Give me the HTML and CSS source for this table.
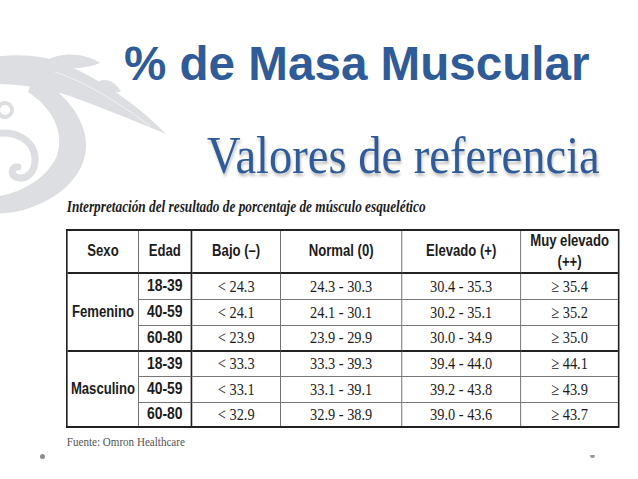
FILE: index.html
```html
<!DOCTYPE html>
<html lang="es">
<head>
<meta charset="utf-8">
<title>% de Masa Muscular</title>
<link rel="stylesheet" href="styles.css">
</head>
<body>
<div class="slide">
  <svg class="ornament" width="200" height="230" viewBox="0 0 200 230" aria-hidden="true">
    <g fill="#dcdee2">
      <path d="M-5 57 C 20 53, 45 56, 62 63 C 97 77, 137 104, 166 134 C 135 121, 100 107, 75 98 C 55 90, 25 84, -5 84 Z"/>
      <path d="M34 74 C 64 92, 88 120, 86 148 C 84 178, 56 203, 15 212 L -5 214 L -5 197 C 22 193, 46 178, 56 158 C 64 138, 58 112, 28 92 Z"/>
      <path d="M45 62 C 60 51, 85 53, 100 63 C 85 70, 62 70, 45 62 Z"/>
      <path d="M98 82 C 106 77, 116 82, 121 92 C 112 93, 103 89, 98 82 Z"/>
    </g>
    <g fill="none" stroke="#dcdee2" stroke-linecap="round">
      <path d="M80 94 C 105 102, 130 113, 150 123" stroke-width="2"/>
      <circle cx="5" cy="110" r="7" stroke-width="4"/>
      <path d="M-5 134 C 15 130, 34 140, 35 158 C 36 173, 25 181, 16 177 C 10 174, 12 166, 18 167" stroke-width="7"/>
    </g>
    <g fill="none" stroke="#ffffff" stroke-opacity="0.6" stroke-linecap="round">
      <path d="M55 72 C 85 82, 115 100, 150 126" stroke-width="1"/>
    </g>
  </svg>

  <h1 class="title">% de Masa Muscular</h1>
  <h2 class="subtitle"><span class="subtitle-text">Valores de referencia</span></h2>

  <div class="fig">
    <p class="caption">Interpretación del resultado de porcentaje de músculo esquelético</p>
    <div class="tbl">
      <div class="c hd">Sexo</div>
      <div class="c hd edad">Edad</div>
      <div class="c hd">Bajo (–)</div>
      <div class="c hd">Normal (0)</div>
      <div class="c hd">Elevado (+)</div>
      <div class="c hd last lh">Muy elevado<br>(++)</div>

      <div class="c sex grp">Femenino</div>
      <div class="c age edad">18-39</div>
      <div class="c val">&lt; 24.3</div>
      <div class="c val">24.3 - 30.3</div>
      <div class="c val">30.4 - 35.3</div>
      <div class="c val last">≥ 35.4</div>

      <div class="c age edad">40-59</div>
      <div class="c val">&lt; 24.1</div>
      <div class="c val">24.1 - 30.1</div>
      <div class="c val">30.2 - 35.1</div>
      <div class="c val last">≥ 35.2</div>

      <div class="c age edad grp">60-80</div>
      <div class="c val grp">&lt; 23.9</div>
      <div class="c val grp">23.9 - 29.9</div>
      <div class="c val grp">30.0 - 34.9</div>
      <div class="c val grp last">≥ 35.0</div>

      <div class="c sex end">Masculino</div>
      <div class="c age edad">18-39</div>
      <div class="c val">&lt; 33.3</div>
      <div class="c val">33.3 - 39.3</div>
      <div class="c val">39.4 - 44.0</div>
      <div class="c val last">≥ 44.1</div>

      <div class="c age edad">40-59</div>
      <div class="c val">&lt; 33.1</div>
      <div class="c val">33.1 - 39.1</div>
      <div class="c val">39.2 - 43.8</div>
      <div class="c val last">≥ 43.9</div>

      <div class="c age edad end">60-80</div>
      <div class="c val end">&lt; 32.9</div>
      <div class="c val end">32.9 - 38.9</div>
      <div class="c val end">39.0 - 43.6</div>
      <div class="c val end last">≥ 43.7</div>
    </div>
    <p class="source">Fuente: Omron Healthcare</p>
  </div>

  <div class="footer">
    <span class="dot dot-left"></span>
    <span class="dot dot-right"></span>
  </div>
</div>
</body>
</html>
```

FILE: styles.css
```css
html, body {
  margin: 0;
  padding: 0;
  background: #ffffff;
}

body {
  overflow: hidden;
}

.slide {
  position: relative;
  width: 638px;
  height: 479px;
  overflow: hidden;
  background: #ffffff;
}

.ornament {
  position: absolute;
  left: 0;
  top: 0;
  z-index: 0;
}

.title {
  position: relative;
  margin: 40px 0 0 0;
  padding-left: 124px;
  font-family: "Liberation Sans", Arial, sans-serif;
  font-weight: bold;
  font-size: 47.6px;
  line-height: 47px;
  color: #2f5b98;
  white-space: nowrap;
}

.subtitle {
  position: relative;
  margin: 43px 0 0 0;
  padding-left: 207px;
  font-family: "Liberation Serif", "Times New Roman", serif;
  font-weight: normal;
  font-size: 52px;
  line-height: 52px;
  height: 52px;
  color: #2f5b98;
  text-shadow: 1px 3px 3px rgba(0, 0, 0, 0.25);
}

.subtitle-text {
  display: inline-block;
  transform: scaleX(0.895);
  transform-origin: 0 0;
  white-space: nowrap;
}

.fig {
  position: relative;
  margin: 17px 0 0 66px;
  width: 675.3px;
  transform: scaleX(0.82);
  transform-origin: 0 0;
  color: #1c1c1c;
}

.caption {
  margin: 0;
  padding-left: 1px;
  font-family: "Liberation Serif", "Times New Roman", serif;
  font-weight: bold;
  font-style: italic;
  font-size: 16.2px;
  line-height: 17px;
  height: 17px;
  white-space: nowrap;
}

.tbl {
  margin-top: 12.7px;
  display: grid;
  grid-template-columns: 87.2px 64.6px 108.5px 147.6px 145.1px 118.3px;
  grid-template-rows: 43px 26px 26px 26px 25px 26px 23px;
  border: 2px solid #222222;
  background: #ffffff;
}

.c {
  box-sizing: border-box;
  display: flex;
  align-items: center;
  justify-content: center;
  text-align: center;
  border-right: 1px solid #555555;
  border-bottom: 1px solid #777777;
  white-space: nowrap;
}

.c.last {
  border-right: none;
}

.c.edad {
  border-right: 2px solid #222222;
}

.c.grp {
  border-bottom: 2px solid #222222;
}

.c.end {
  border-bottom: none;
}

.hd {
  font-family: "Liberation Sans", Arial, sans-serif;
  font-weight: bold;
  font-size: 16px;
  border-bottom: 2px solid #222222;
}

.hd.lh {
  line-height: 21px;
  padding-bottom: 1px;
}

.sex {
  grid-row: span 3;
  font-family: "Liberation Sans", Arial, sans-serif;
  font-weight: bold;
  font-size: 16px;
}

.age {
  font-family: "Liberation Sans", Arial, sans-serif;
  font-weight: bold;
  font-size: 17px;
}

.val {
  font-family: "Liberation Serif", "Times New Roman", serif;
  font-size: 17.5px;
}

.source {
  margin: 7px 0 0 0;
  padding-left: 1px;
  font-family: "Liberation Serif", "Times New Roman", serif;
  font-size: 13.5px;
  line-height: 13px;
  color: #555555;
  white-space: nowrap;
}

.footer {
  position: relative;
  display: flex;
  justify-content: space-between;
  align-items: center;
  margin-top: 6px;
  padding: 0 43px 0 40px;
  height: 6px;
}

.dot {
  display: block;
  background: #8c8c8c;
}

.dot-left {
  width: 5px;
  height: 5px;
  border-radius: 50%;
}

.dot-right {
  width: 5px;
  height: 3px;
  border-radius: 1px 1px 3px 3px;
  background: #9a9a9a;
}
```
